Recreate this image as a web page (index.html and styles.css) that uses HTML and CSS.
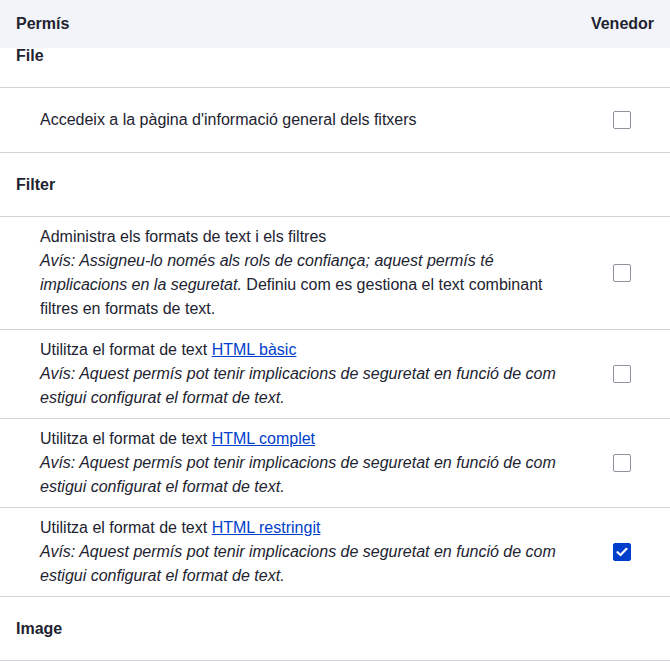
FILE: index.html
```html
<!DOCTYPE html>
<html lang="ca">
<head>
<meta charset="utf-8">
<title>Permisos</title>
<link rel="stylesheet" href="styles.css">
</head>
<body>
<div class="perm-table">
  <div class="row head">
    <div class="cell-name">Permís</div>
    <div class="cell-role">Venedor</div>
  </div>
  <div class="row module first">
    <div class="cell-name">File</div>
    <div class="cell-role"></div>
  </div>
  <div class="row perm">
    <div class="cell-name">Accedeix a la pàgina d'informació general dels fitxers</div>
    <div class="cell-role"><span class="cb"></span></div>
  </div>
  <div class="row module">
    <div class="cell-name">Filter</div>
    <div class="cell-role"></div>
  </div>
  <div class="row perm">
    <div class="cell-name">Administra els formats de text i els filtres<br><em>Avís: Assigneu-lo només als rols de confiança; aquest permís té implicacions en la seguretat.</em> Definiu com es gestiona el text combinant filtres en formats de text.</div>
    <div class="cell-role"><span class="cb"></span></div>
  </div>
  <div class="row perm">
    <div class="cell-name">Utilitza el format de text <a href="#">HTML bàsic</a><br><em>Avís: Aquest permís pot tenir implicacions de seguretat en funció de com estigui configurat el format de text.</em></div>
    <div class="cell-role"><span class="cb"></span></div>
  </div>
  <div class="row perm">
    <div class="cell-name">Utilitza el format de text <a href="#">HTML complet</a><br><em>Avís: Aquest permís pot tenir implicacions de seguretat en funció de com estigui configurat el format de text.</em></div>
    <div class="cell-role"><span class="cb"></span></div>
  </div>
  <div class="row perm">
    <div class="cell-name">Utilitza el format de text <a href="#">HTML restringit</a><br><em>Avís: Aquest permís pot tenir implicacions de seguretat en funció de com estigui configurat el format de text.</em></div>
    <div class="cell-role"><span class="cb checked"><svg width="12" height="10" viewBox="0 0 12 10"><path d="M1.5 5.2 L4.5 8 L10.5 1.8" fill="none" stroke="#fff" stroke-width="2.2" stroke-linecap="round" stroke-linejoin="round"/></svg></span></div>
  </div>
  <div class="row module">
    <div class="cell-name">Image</div>
    <div class="cell-role"></div>
  </div>
</div>
</body>
</html>
```

FILE: styles.css
```css
* { box-sizing: border-box; }
html, body { margin: 0; padding: 0; background: #fff; }
body {
  font-family: "Liberation Sans", Arial, sans-serif;
  font-size: 16px;
  line-height: 24px;
  color: #222330;
  overflow: hidden;
}
.perm-table { width: 670px; }
.row {
  display: grid;
  grid-template-columns: 1fr 95px;
  align-items: center;
  border-bottom: 1px solid #d3d4d9;
}
.head {
  position: sticky;
  top: 0;
  z-index: 2;
  height: 48px;
  background: #f3f4f9;
  border-bottom: none;
  font-weight: bold;
}
.head .cell-name { padding-left: 16px; }
.head .cell-role { text-align: center; }
.module {
  min-height: 64px;
  font-weight: bold;
}
.module .cell-name { padding-left: 16px; }
.module.first { margin-top: -24px; position: relative; z-index: 1; }
.perm {
  min-height: 65px;
  padding: 8px 0;
}
.perm .cell-name { padding: 0 16px 0 40px; }
.perm .cell-role { padding-right: 2px; }
.cell-role {
  display: flex;
  justify-content: center;
  align-items: center;
}
em { font-style: italic; }
a { color: #003ecc; text-decoration: underline; }
.cb {
  width: 18px;
  height: 18px;
  border: 1px solid #8e929c;
  border-radius: 2px;
  background: #fff;
  display: flex;
  align-items: center;
  justify-content: center;
}
.cb.checked {
  background: #003ecc;
  border-color: #003ecc;
}
```
